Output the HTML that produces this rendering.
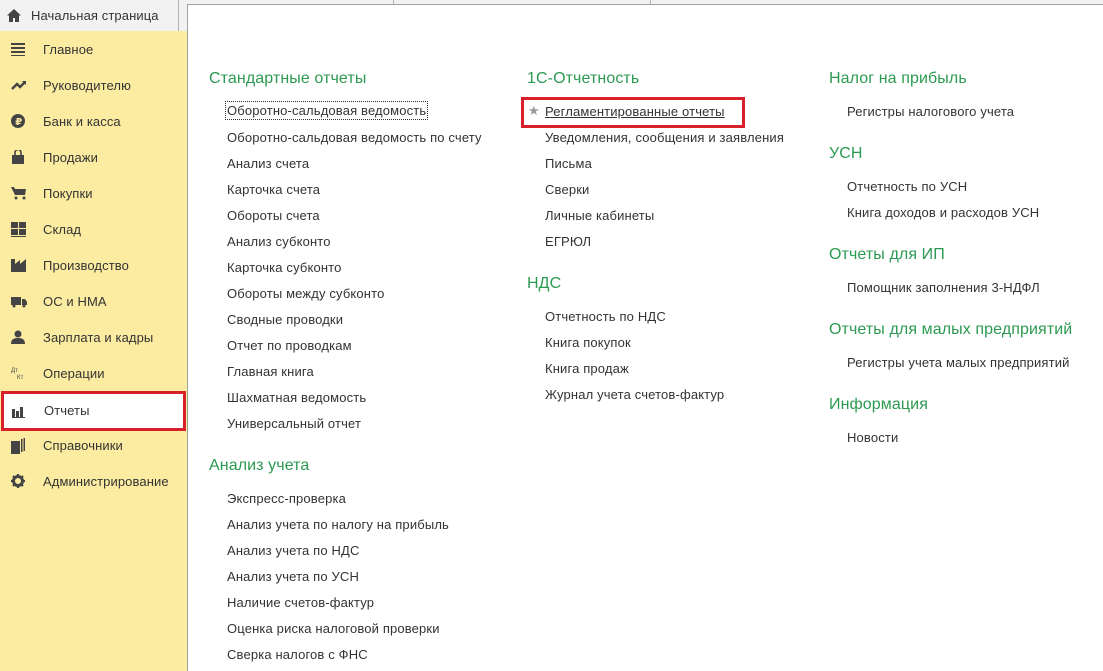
<!DOCTYPE html>
<html><head><meta charset="utf-8"><style>
*{margin:0;padding:0;box-sizing:border-box}
html{width:1103px;height:671px;overflow:hidden}
body{width:1103px;height:671px;overflow:hidden;background:#f2f2f2;font-family:"Liberation Sans",Arial,sans-serif;position:relative;color:#333}
.tabbar{position:absolute;left:0;top:0;width:1103px;height:31px;background:#f2f2f2}
.home{position:absolute;left:0;top:0;width:179px;height:31px;border-right:1px solid #b5b5b5;font-size:13px;line-height:31px;padding-left:31px;color:#333;letter-spacing:0.1px}
.home svg{position:absolute;left:7px;top:9px}
.div{position:absolute;top:0;height:4px;width:1px;background:#b5b5b5}
.side{position:absolute;left:0;top:31px;width:188px;height:640px;background:#fbeca2;border-right:1px solid #a59e6a}
.si{position:absolute;left:0;width:187px;height:36px;font-size:13px;line-height:37px;padding-left:43px;color:#333;letter-spacing:0.1px}
.si svg{position:absolute;left:11px;top:11px}
.sel{background:#fff;border:3px solid #d7202a;padding-left:40px;line-height:34px;height:40px;left:1px;width:185px}
.main{position:absolute;left:187px;top:4px;width:916px;height:667px;background:#fff;border-left:1px solid #a0a0a0;border-top:1px solid #a0a0a0}
.h{position:absolute;font-size:16px;color:#2c9a52;margin-top:1px;letter-spacing:0.1px}
.i{position:absolute;font-size:13px;color:#333;white-space:nowrap;letter-spacing:0.15px;margin-top:1px}
</style></head><body>
<div class="tabbar">
<div class="home"><svg width="14" height="13" viewBox="0 0 14 13"><path d="M7 0L0 6.5h2V13h4V9h2v4h4V6.5h2z" fill="#444"/></svg>Начальная страница</div>
<div class="div" style="left:393px"></div><div class="div" style="left:650px"></div>
</div>
<div class="side">
<div class="si" style="top:0"><svg width="14" height="14"><rect y="1" width="14" height="2" fill="#444"/><rect y="5" width="14" height="2" fill="#444"/><rect y="9" width="14" height="2" fill="#444"/><rect y="13" width="14" height="1.5" fill="#444"/></svg>Главное</div>
<div class="si" style="top:36px"><svg width="16" height="14"><path d="M1 11l5-5 3 3 5-5" stroke="#444" stroke-width="2.4" fill="none"/><path d="M11 3h4v4z" fill="#444"/></svg>Руководителю</div>
<div class="si" style="top:72px"><svg width="14" height="14"><circle cx="7" cy="7" r="7" fill="#444"/><text x="4.2" y="11" font-size="10" fill="#fbeca2" font-weight="bold" font-family="DejaVu Sans">₽</text></svg>Банк и касса</div>
<div class="si" style="top:108px"><svg width="14" height="14"><rect x="1" y="5" width="12" height="9" fill="#444"/><path d="M4 6V2.5a3 3 0 0 1 6 0V6" stroke="#444" stroke-width="1.6" fill="none"/></svg>Продажи</div>
<div class="si" style="top:144px"><svg width="16" height="14"><path d="M0 1h3l1 2h11l-1 6H4z" fill="#444"/><circle cx="5" cy="12" r="1.5" fill="#444"/><circle cx="13" cy="12" r="1.5" fill="#444"/></svg>Покупки</div>
<div class="si" style="top:180px"><svg width="15" height="15"><rect width="7" height="6" fill="#444"/><rect x="8" width="7" height="6" fill="#444"/><rect y="7" width="7" height="6" fill="#444"/><rect x="8" y="7" width="7" height="6" fill="#444"/><rect y="14" width="15" height="1" fill="#444"/></svg>Склад</div>
<div class="si" style="top:216px"><svg width="15" height="14"><path d="M0 14V1h4v5l5-4v4l6-5v13z" fill="#444"/></svg>Производство</div>
<div class="si" style="top:252px"><svg width="16" height="14"><rect y="3" width="10" height="8" fill="#444"/><path d="M11 5h3l2 3v3h-5z" fill="#444"/><circle cx="3" cy="12" r="1.5" fill="#444"/><circle cx="13" cy="12" r="1.5" fill="#444"/></svg>ОС и НМА</div>
<div class="si" style="top:288px"><svg width="14" height="14"><circle cx="7" cy="4" r="3.5" fill="#444"/><path d="M0 14c0-5 3-6 7-6s7 1 7 6z" fill="#444"/></svg>Зарплата и кадры</div>
<div class="si" style="top:324px"><svg width="16" height="14"><text x="0" y="6" font-size="6" fill="#444" font-family="Liberation Sans">Дт</text><text x="6" y="13" font-size="6" fill="#444" font-family="Liberation Sans">Кт</text></svg>Операции</div>
<div class="si sel" style="top:360px"><svg width="14" height="14" style="left:8px;top:10px"><rect y="5" width="3" height="8" fill="#444"/><rect x="4" y="7" width="3" height="6" fill="#444"/><rect x="8" y="3" width="3" height="10" fill="#444"/><rect y="13" width="13" height="1" fill="#444"/></svg>Отчеты</div>
<div class="si" style="top:396px"><svg width="14" height="16"><rect x="0" y="3" width="9" height="13" fill="#444"/><rect x="10" y="1" width="1.5" height="13" fill="#444"/><rect x="12.5" y="0" width="1.5" height="13" fill="#444"/></svg>Справочники</div>
<div class="si" style="top:432px"><svg width="14" height="14" viewBox="0 0 14 14"><circle cx="7" cy="7" r="4.5" fill="none" stroke="#444" stroke-width="3"/><path d="M7 0v3M7 11v3M0 7h3M11 7h3M2 2l2 2M10 10l2 2M2 12l2-2M10 4l2-2" stroke="#444" stroke-width="2.2"/></svg>Администрирование</div>
</div>
<div class="main"></div>
<div class="h" style="left:209px;top:69px">Стандартные отчеты</div>
<div class="i" style="left:226px;top:101px;outline:1px dotted #333;padding:0 1px;line-height:17px">Оборотно-сальдовая ведомость</div>
<div class="i" style="left:227px;top:129px">Оборотно-сальдовая ведомость по счету</div>
<div class="i" style="left:227px;top:155px">Анализ счета</div>
<div class="i" style="left:227px;top:181px">Карточка счета</div>
<div class="i" style="left:227px;top:207px">Обороты счета</div>
<div class="i" style="left:227px;top:233px">Анализ субконто</div>
<div class="i" style="left:227px;top:259px">Карточка субконто</div>
<div class="i" style="left:227px;top:285px">Обороты между субконто</div>
<div class="i" style="left:227px;top:311px">Сводные проводки</div>
<div class="i" style="left:227px;top:337px">Отчет по проводкам</div>
<div class="i" style="left:227px;top:363px">Главная книга</div>
<div class="i" style="left:227px;top:389px">Шахматная ведомость</div>
<div class="i" style="left:227px;top:415px">Универсальный отчет</div>
<div class="h" style="left:209px;top:456px">Анализ учета</div>
<div class="i" style="left:227px;top:490px">Экспресс-проверка</div>
<div class="i" style="left:227px;top:516px">Анализ учета по налогу на прибыль</div>
<div class="i" style="left:227px;top:542px">Анализ учета по НДС</div>
<div class="i" style="left:227px;top:568px">Анализ учета по УСН</div>
<div class="i" style="left:227px;top:594px">Наличие счетов-фактур</div>
<div class="i" style="left:227px;top:620px">Оценка риска налоговой проверки</div>
<div class="i" style="left:227px;top:646px">Сверка налогов с ФНС</div>

<div class="h" style="left:527px;top:69px">1С-Отчетность</div>
<div style="position:absolute;left:521px;top:97px;width:224px;height:31px;border:3px solid #d7202a"></div>
<div class="i" style="left:528px;top:102px;color:#999;font-size:13px">★</div>
<div class="i" style="left:545px;top:103px;text-decoration:underline">Регламентированные отчеты</div>
<div class="i" style="left:545px;top:129px">Уведомления, сообщения и заявления</div>
<div class="i" style="left:545px;top:155px">Письма</div>
<div class="i" style="left:545px;top:181px">Сверки</div>
<div class="i" style="left:545px;top:207px">Личные кабинеты</div>
<div class="i" style="left:545px;top:233px">ЕГРЮЛ</div>
<div class="h" style="left:527px;top:274px">НДС</div>
<div class="i" style="left:545px;top:308px">Отчетность по НДС</div>
<div class="i" style="left:545px;top:334px">Книга покупок</div>
<div class="i" style="left:545px;top:360px">Книга продаж</div>
<div class="i" style="left:545px;top:386px">Журнал учета счетов-фактур</div>

<div class="h" style="left:829px;top:69px">Налог на прибыль</div>
<div class="i" style="left:847px;top:103px">Регистры налогового учета</div>
<div class="h" style="left:829px;top:144px">УСН</div>
<div class="i" style="left:847px;top:178px">Отчетность по УСН</div>
<div class="i" style="left:847px;top:204px">Книга доходов и расходов УСН</div>
<div class="h" style="left:829px;top:245px">Отчеты для ИП</div>
<div class="i" style="left:847px;top:279px">Помощник заполнения 3-НДФЛ</div>
<div class="h" style="left:829px;top:320px">Отчеты для малых предприятий</div>
<div class="i" style="left:847px;top:354px">Регистры учета малых предприятий</div>
<div class="h" style="left:829px;top:395px">Информация</div>
<div class="i" style="left:847px;top:429px">Новости</div>
</body></html>
